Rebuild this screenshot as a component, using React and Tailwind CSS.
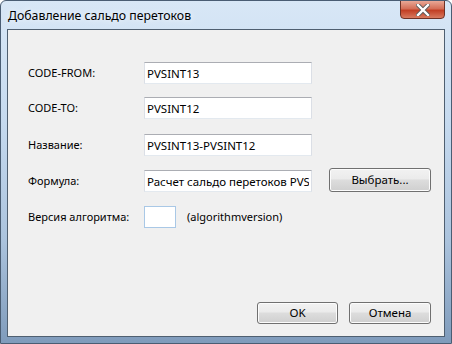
import React from 'react'

const font = { fontFamily: '"Segoe UI", "Noto Sans", "Open Sans", sans-serif' }

function Field({ value, className = '' }) {
  return (
    <input
      type='text'
      readOnly
      value={value}
      className={'h-[22px] w-[168px] bg-white border border-[#abadb3] border-l-[#dbdfe6] border-r-[#dbdfe6] border-b-[#e3e9ef] px-[2px] text-[11.5px] text-black outline-none ' + className}
    />
  )
}

function WinButton({ children, className = '' }) {
  return (
    <button className={'relative rounded-[3px] border border-[#707070] text-[11.5px] text-black bg-[linear-gradient(to_bottom,#f2f2f2_0%,#ebebeb_45%,#dddddd_50%,#cfcfcf_100%)] shadow-[inset_0_0_0_1px_#fcfcfc] ' + className}>
      {children}
    </button>
  )
}

export default function App() {
  return (
    <div className='w-[452px] h-[344px] flex flex-col rounded-t-[6px] border border-[#4a5d73] bg-[linear-gradient(to_bottom,#d8e7f6_0%,#c6daef_35%,#abc3dd_70%,#7f9bbb_100%)] overflow-hidden' style={font}>
      {/* заголовок окна */}
      <div className='h-[28px] flex items-start justify-between pl-[7px] pr-[6px]'>
        <span className='mt-[6px] text-[12.3px] text-black [text-shadow:0_0_6px_#ffffff]'>Добавление сальдо перетоков</span>
        <div className='w-[45px] h-[19px] -mt-px rounded-b-[4px] border border-[#6e3226] bg-[linear-gradient(to_bottom,#e9a896_0%,#d46e57_45%,#c23f24_55%,#d87a5f_100%)] flex items-center justify-center'>
          <svg width='14' height='12' viewBox='0 0 14 12'>
            <path d='M2 1 L12 11 M12 1 L2 11' stroke='#5a5a5a' strokeWidth='4.2' strokeLinecap='square' />
            <path d='M2 1 L12 11 M12 1 L2 11' stroke='#ffffff' strokeWidth='2.4' strokeLinecap='square' />
          </svg>
        </div>
      </div>

      {/* клиентская область */}
      <div className='flex-1 mx-[6px] mb-[6px] border border-[#4f5f70] bg-[#f0f0f0] flex flex-col text-[11px] text-black'>
        <div className='flex items-center h-[22px] mt-[32px]'>
          <span className='w-[136px] pl-[20px]'>CODE-FROM:</span>
          <Field value='PVSINT13' />
        </div>
        <div className='flex items-center h-[22px] mt-[13px]'>
          <span className='w-[136px] pl-[20px]'>CODE-TO:</span>
          <Field value='PVSINT12' />
        </div>
        <div className='flex items-center h-[22px] mt-[15px]'>
          <span className='w-[136px] pl-[20px]'>Название:</span>
          <Field value='PVSINT13-PVSINT12' />
        </div>
        <div className='flex items-center h-[24px] mt-[12px]'>
          <span className='w-[136px] pl-[20px] mt-[2px]'>Формула:</span>
          <Field value='Расчет сальдо перетоков PVSINT13-PVSINT12' className='mt-[2px]' />
          <WinButton className='ml-[17px] w-[102px] h-[24px]'>Выбрать...</WinButton>
        </div>
        <div className='flex items-center h-[22px] mt-[14px]'>
          <span className='w-[136px] pl-[20px]'>Версия алгоритма:</span>
          <input type='text' readOnly value='' className='h-[22px] w-[32px] bg-white border border-[#a9c8e6] outline-none' />
          <span className='ml-[11px]'>(algorithmversion)</span>
        </div>

        <div className='mt-auto mb-[12px] flex justify-end gap-[11px] pr-[13px]'>
          <WinButton className='w-[81px] h-[22px]'>OK</WinButton>
          <WinButton className='w-[82px] h-[22px]'>Отмена</WinButton>
        </div>
      </div>
    </div>
  )
}
